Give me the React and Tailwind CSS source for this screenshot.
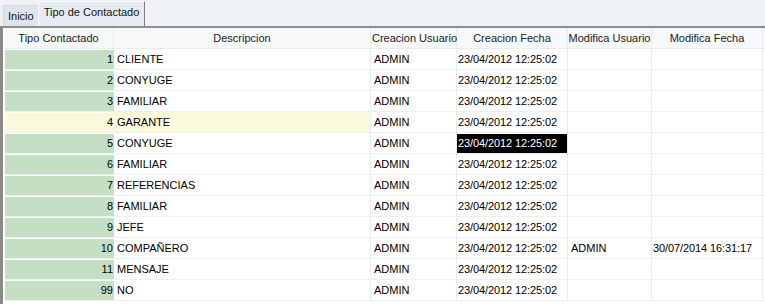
import React from 'react';

const rows = [
  { id: 1, desc: 'CLIENTE' },
  { id: 2, desc: 'CONYUGE' },
  { id: 3, desc: 'FAMILIAR' },
  { id: 4, desc: 'GARANTE', selected: true },
  { id: 5, desc: 'CONYUGE', focusDate: true },
  { id: 6, desc: 'FAMILIAR' },
  { id: 7, desc: 'REFERENCIAS' },
  { id: 8, desc: 'FAMILIAR' },
  { id: 9, desc: 'JEFE' },
  { id: 10, desc: 'COMPAÑERO', modUser: 'ADMIN', modDate: '30/07/2014 16:31:17' },
  { id: 11, desc: 'MENSAJE' },
  { id: 99, desc: 'NO' },
];

const cols = ['w-[110px]', 'w-[257px]', 'w-[86px]', 'w-[111px]', 'w-[84px]', 'w-[111px]'];
const headers = ['Tipo Contactado', 'Descripcion', 'Creacion Usuario', 'Creacion Fecha', 'Modifica Usuario', 'Modifica Fecha'];

const dateCls = 'text-[11px] tracking-[-0.1px]';

export default function App() {
  return (
    <div className="w-[765px] h-[304px] overflow-hidden bg-white text-[11px] text-black" style={{ fontFamily: '"Liberation Sans", Arial, sans-serif' }}>
      {/* tab strip */}
      <div className="h-[26px] bg-[#eef1f5] flex items-end pl-[3px]">
        <div className="h-[21px] px-[4px] bg-[#dfe5ec] border-t border-l border-[#cfd6de] flex items-center text-[#111]">
          Inicio
        </div>
        <div className="h-[25px] px-[5px] bg-[#e7ecf2] border-t border-l border-[#f8fafc] border-r border-r-[#7d7d7d] flex items-center text-[#111] pb-[4px]">
          Tipo de Contactado
        </div>
      </div>

      {/* grid */}
      <div className="border-t-2 border-t-[#8e8e8e] border-l-[3px] border-l-[#8a8a8a] h-[278px] pl-[1px]">
        <div className="flex h-[21px] bg-[#f6f8fa] border-b border-[#e8ecf0] text-[#222]">
          {headers.map((h, i) => (
            <div key={h} className={`${cols[i]} shrink-0 flex items-center justify-center whitespace-nowrap border-r border-[#e8ecf0] ${i === 2 ? 'pl-[2px]' : ''}`}>
              {h}
            </div>
          ))}
          <div className="flex-1" />
        </div>

        {rows.map((r) => (
          <div key={r.id} className="flex h-[21px] border-b border-[#edf0f3]">
            <div className={`${cols[0]} shrink-0 pl-[1px] pt-[1px]`}>
              <div className={`h-[19px] flex items-center justify-end pr-[1px] ${r.selected ? 'bg-[#fbf9dc]' : 'bg-[#c5dfc4]'}`}>
                {r.id}
              </div>
            </div>
            <div className={`${cols[1]} shrink-0 flex items-center pl-[3px] border-r border-[#e8ecf0] ${r.selected ? 'bg-[#fbf9dc]' : ''}`}>
              {r.desc}
            </div>
            <div className={`${cols[2]} shrink-0 flex items-center pl-[3px] border-r border-[#e8ecf0]`}>
              ADMIN
            </div>
            <div className={`${cols[3]} shrink-0 border-r border-[#e8ecf0] pt-[1px]`}>
              <div className={`h-[19px] flex items-center pl-[1px] ${dateCls} ${r.focusDate ? 'bg-black text-white' : ''}`}>
                23/04/2012 12:25:02
              </div>
            </div>
            <div className={`${cols[4]} shrink-0 flex items-center pl-[3px] border-r border-[#e8ecf0]`}>
              {r.modUser}
            </div>
            <div className={`${cols[5]} shrink-0 flex items-center pl-[1px] border-r border-[#e8ecf0] ${dateCls}`}>
              {r.modDate}
            </div>
            <div className="flex-1" />
          </div>
        ))}
      </div>
    </div>
  );
}
